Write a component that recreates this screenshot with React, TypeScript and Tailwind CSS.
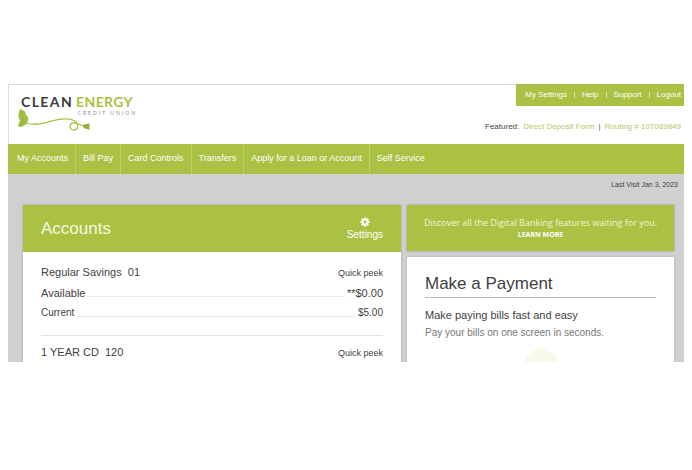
interface Account {
  name: string;
  number: string;
  available?: string;
  current?: string;
}

const UTILITY_LINKS = ["My Settings", "Help", "Support", "Logout"];

const NAV_LINKS = [
  "My Accounts",
  "Bill Pay",
  "Card Controls",
  "Transfers",
  "Apply for a Loan or Account",
  "Self Service",
];

const ACCOUNTS: Account[] = [
  { name: "Regular Savings", number: "01", available: "**$0.00", current: "$5.00" },
  { name: "1 YEAR CD", number: "120" },
];

function Logo() {
  return (
    <a href="#" aria-label="Clean Energy Credit Union home" className="block w-[118px] pt-[9px]">
      <div className="flex gap-[3px] font-[Lato,sans-serif] text-[14px] leading-4 font-bold">
        <span className="tracking-widest text-[#3b3b3b]">CLEAN</span>
        <span className="tracking-wide text-[#abc144]">ENERGY</span>
      </div>
      <div className="pr-[2px] text-right font-[Lato,sans-serif] text-[5px] leading-[6px] tracking-[2px] whitespace-nowrap text-[#8c8c8c]">
        CREDIT UNION
      </div>
      <svg className="-mt-2 -ml-1 block h-6 w-[76px]" viewBox="0 0 76 24" fill="none" aria-hidden="true">
        <path
          d="M3 1c4 1 6 3 6 6 2 1 3 4 2 6-1 3-3 5-7 6-2 0-3-1-3-1 0-2 1-4 2-5-2-3-2-7 0-12z"
          fill="#a3bf45"
        />
        <path d="M3 3c3 5 4 8 1 15" stroke="#87a637" strokeWidth="0.6" />
        <path
          d="M9 15c10 3 18 0 26-2 10-3 20-3 24 1 3 3 2 8-2 8-5 0-5-7-1-7 4-1 7 3 12 3"
          stroke="#abc144"
          strokeWidth="1.3"
          strokeLinecap="round"
        />
        <path d="M66 18c1-2 3-2 4-2l3-1-1 2 1 1-1 2 1 2-3-1c-2 0-4-1-4-3z" fill="#93b13c" />
      </svg>
    </a>
  );
}

function Header() {
  return (
    <header className="flex h-[60px] justify-between border-t border-l border-[#dcdcdc] pl-3">
      <Logo />
      <div className="-mt-px flex flex-col items-end">
        <nav aria-label="Utility" className="flex h-[22px] items-center bg-[#abc144] pl-[9px] text-[8px] text-white">
          {UTILITY_LINKS.map((label, i) => (
            <span key={label} className="flex items-center">
              {i > 0 && <span className="mx-[7px] h-[6px] w-px bg-white/60" />}
              <a href="#" className={i === UTILITY_LINKS.length - 1 ? "pr-[3px]" : ""}>
                {label}
              </a>
            </span>
          ))}
        </nav>
        <div className="mt-[15px] flex items-center gap-1 pr-[3px] text-[8px] leading-3">
          <span className="text-[#444]">Featured:</span>
          <a href="#" className="text-[#b5c867]">
            Direct Deposit Form
          </a>
          <span className="text-[#555]">|</span>
          <a href="#" className="text-[#b5c867]">
            Routing # 107089849
          </a>
        </div>
      </div>
    </header>
  );
}

function MainNav() {
  return (
    <nav aria-label="Main" className="flex h-[30px] bg-[#abc144] pl-[2px] text-[9px] text-white">
      {NAV_LINKS.map((label, i) => (
        <a
          key={label}
          href="#"
          className={`flex items-center px-[7px] ${i < NAV_LINKS.length - 1 ? "border-r border-[#bdcf6c]" : ""}`}
        >
          {label}
        </a>
      ))}
    </nav>
  );
}

function GearIcon() {
  return (
    <svg className="h-[10px] w-[10px]" viewBox="0 0 20 20" aria-hidden="true">
      <g stroke="#fff" strokeWidth="4">
        <path d="M10 1v18M1 10h18M3.6 3.6l12.8 12.8M16.4 3.6L3.6 16.4" />
      </g>
      <circle cx="10" cy="10" r="7" fill="#fff" />
      <circle cx="10" cy="10" r="3" fill="#abc144" />
    </svg>
  );
}

function BalanceRow({ label, value }: { label: string; value: string }) {
  return (
    <>
      <dt>{label}</dt>
      <dd className="flex flex-1 items-end">
        <span className="mx-[2px] mb-1 flex-1 border-b border-[#ececec]" />
        {value}
      </dd>
    </>
  );
}

function AccountItem({ account }: { account: Account }) {
  return (
    <li className="border-b border-[#e2e2e2] pt-2 last:border-0">
      <div className="flex items-end justify-between leading-4">
        <h3 className="text-[11px] whitespace-pre">{`${account.name}  ${account.number}`}</h3>
        <button type="button" className="text-[9px] leading-[14px]">
          Quick peek
        </button>
      </div>
      {account.available && account.current && (
        <div className="pt-[5px] pb-[14px]">
          <dl className="flex text-[11px] leading-4">
            <BalanceRow label="Available" value={account.available} />
          </dl>
          <dl className="mt-1 flex text-[10px] leading-4">
            <BalanceRow label="Current" value={account.current} />
          </dl>
        </div>
      )}
    </li>
  );
}

function AccountsCard() {
  return (
    <section className="bg-white shadow-[0_0_2px_#999]">
      <div className="flex h-[47px] items-center justify-between bg-[#abc144] px-[18px] text-white">
        <h2 className="text-[17px] text-[#f4f8df]">Accounts</h2>
        <button type="button" className="flex flex-col items-center text-[10px] leading-3">
          <GearIcon />
          <span className="mt-[2px]">Settings</span>
        </button>
      </div>
      <ul className="px-[18px] pt-1 pb-[2px]">
        {ACCOUNTS.map((account) => (
          <AccountItem key={account.number} account={account} />
        ))}
      </ul>
    </section>
  );
}

function Promo() {
  return (
    <section className="flex h-[46px] flex-col items-center justify-center bg-[#abc144] font-['Open_Sans',sans-serif] shadow-[0_0_2px_#888]">
      <p className="text-[9px] leading-[14px] whitespace-nowrap text-[#f0f5d8]">
        Discover all the Digital Banking features waiting for you.
      </p>
      <a href="#" className="text-[7px] leading-[10px] font-bold text-white">
        LEARN MORE
      </a>
    </section>
  );
}

function PaymentCard() {
  return (
    <section className="flex flex-1 flex-col bg-white px-[18px] pt-4 shadow-[0_0_2px_#aaa]">
      <h2 className="border-b border-[#bbb] pb-[2px] text-[17px] leading-[22px]">Make a Payment</h2>
      <h3 className="mt-[9px] text-[11px] leading-4">Make paying bills fast and easy</h3>
      <p className="mt-[2px] text-[10px] leading-4 text-[#777]">Pay your bills on one screen in seconds.</p>
      <svg className="mx-auto mt-auto block h-[14px] w-[34px]" viewBox="0 0 34 14" aria-hidden="true">
        <path d="M0 14L3 8l5-3 4-4 8-1 6 5 6 3 2 6z" fill="#f8f9ea" />
      </svg>
    </section>
  );
}

export default function App() {
  return (
    <div className="min-h-screen bg-white px-2 pt-[84px] font-['Liberation_Sans',Arial,sans-serif] text-[#3f3f3f]">
      <Header />
      <MainNav />
      <main className="overflow-hidden bg-[#d0d0d0] pr-[10px] pl-[15px]">
        <p className="-mr-1 pt-[3px] pb-3 text-right text-[7px] leading-4">Last Visit Jan 3, 2023</p>
        <div className="grid grid-cols-[378fr_267fr] gap-[6px]">
          <AccountsCard />
          <div className="flex flex-col gap-[6px]">
            <Promo />
            <PaymentCard />
          </div>
        </div>
      </main>
    </div>
  );
}
